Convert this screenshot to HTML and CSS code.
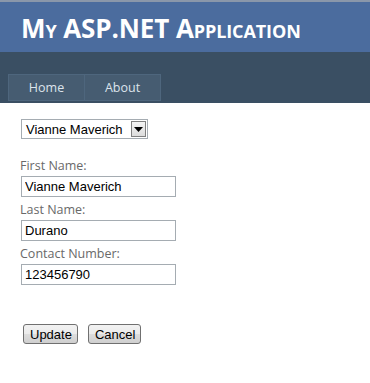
FILE: index.html
```html
<!DOCTYPE html>
<html lang="en">

<head>
  <meta charset="utf-8">
  <title>My ASP.NET Application</title>
  <link rel="stylesheet" href="styles.css">
</head>

<body>
  <div class="page">
    <div class="header">
      <h1 class="title">My ASP.NET Application</h1>
    </div>
    <div class="menu-bar">
      <ul class="menu">
        <li><a href="#">Home</a></li>
        <li><a href="#">About</a></li>
      </ul>
    </div>
    <div class="main">
      <div class="combo">
        <span class="combo-text">Vianne Maverich</span>
        <span class="combo-button">
          <svg width="9" height="5" viewBox="0 0 9 5"><path d="M0 0h9L4.5 5z" fill="#000"/></svg>
        </span>
      </div>
      <div class="fields">
        <label class="field-label">First Name:</label>
        <input class="field-input" type="text" value="Vianne Maverich">
        <label class="field-label">Last Name:</label>
        <input class="field-input" type="text" value="Durano">
        <label class="field-label">Contact Number:</label>
        <input class="field-input" type="text" value="123456790">
      </div>
      <div class="actions">
        <button class="btn">Update</button>
        <button class="btn">Cancel</button>
      </div>
    </div>
  </div>
</body>

</html>
```

FILE: styles.css
```css
html, body {
  margin: 0;
  padding: 0;
  background: #fff;
}

.page {
  border-top: 2px solid #8a97aa;
}

.header {
  background-color: #4b6c9e;
  height: 50px;
  padding-left: 21px;
  display: flex;
  align-items: center;
}

.title {
  margin: 0;
  color: #fff;
  font-family: "Open Sans", sans-serif;
  font-size: 26px;
  font-weight: bold;
  font-variant: small-caps;
  letter-spacing: -0.1px;
  line-height: 1;
  padding-top: 2px;
}

.menu-bar {
  background-color: #3a4f63;
  height: 51px;
  padding: 22px 0 0 8px;
  box-sizing: border-box;
}

.menu {
  list-style: none;
  margin: 0;
  padding: 0;
  display: flex;
}

.menu li a {
  display: block;
  width: 75px;
  height: 25px;
  line-height: 25px;
  text-align: center;
  background-color: #465c71;
  border: 1px solid #4e667d;
  margin-right: -1px;
  color: #dde4ec;
  text-decoration: none;
  font-family: "Open Sans", sans-serif;
  font-size: 12.5px;
}

.main {
  padding: 16px 0 0 21px;
  font-family: "Liberation Sans", Arial, sans-serif;
}

.combo {
  display: inline-flex;
  align-items: center;
  width: 127px;
  height: 20px;
  box-sizing: border-box;
  border: 1px solid #a5acb2;
  font-size: 13px;
}

.combo-text {
  flex: 1;
  padding-left: 4px;
  color: #000;
}

.combo-button {
  width: 15px;
  height: 16px;
  margin-right: 1px;
  box-sizing: border-box;
  border: 1px solid #808080;
  background: linear-gradient(#f4f4f4, #dcdcdc);
  display: flex;
  align-items: center;
  justify-content: center;
}

.fields {
  display: flex;
  flex-direction: column;
  align-items: flex-start;
  margin-top: 19px;
}

.field-label {
  margin-left: -1px;
  font-family: "Open Sans", sans-serif;
  font-size: 12.5px;
  color: #696969;
  line-height: 16px;
}

.field-input {
  width: 155px;
  height: 21px;
  box-sizing: border-box;
  margin: 2px 0 5px;
  padding: 0 3px;
  border: 1px solid #a5acb2;
  font-family: "Liberation Sans", Arial, sans-serif;
  font-size: 13px;
  color: #000;
}

.actions {
  margin-top: 34px;
  padding-left: 2px;
  display: flex;
  gap: 10px;
}

.btn {
  height: 20px;
  padding: 0 5px 0 6px;
  border: 1px solid #707070;
  border-radius: 3px;
  background: linear-gradient(#f2f2f2 0%, #ebebeb 50%, #dddddd 51%, #cfcfcf 100%);
  font-family: "Liberation Sans", Arial, sans-serif;
  font-size: 13px;
  color: #000;
}
```
